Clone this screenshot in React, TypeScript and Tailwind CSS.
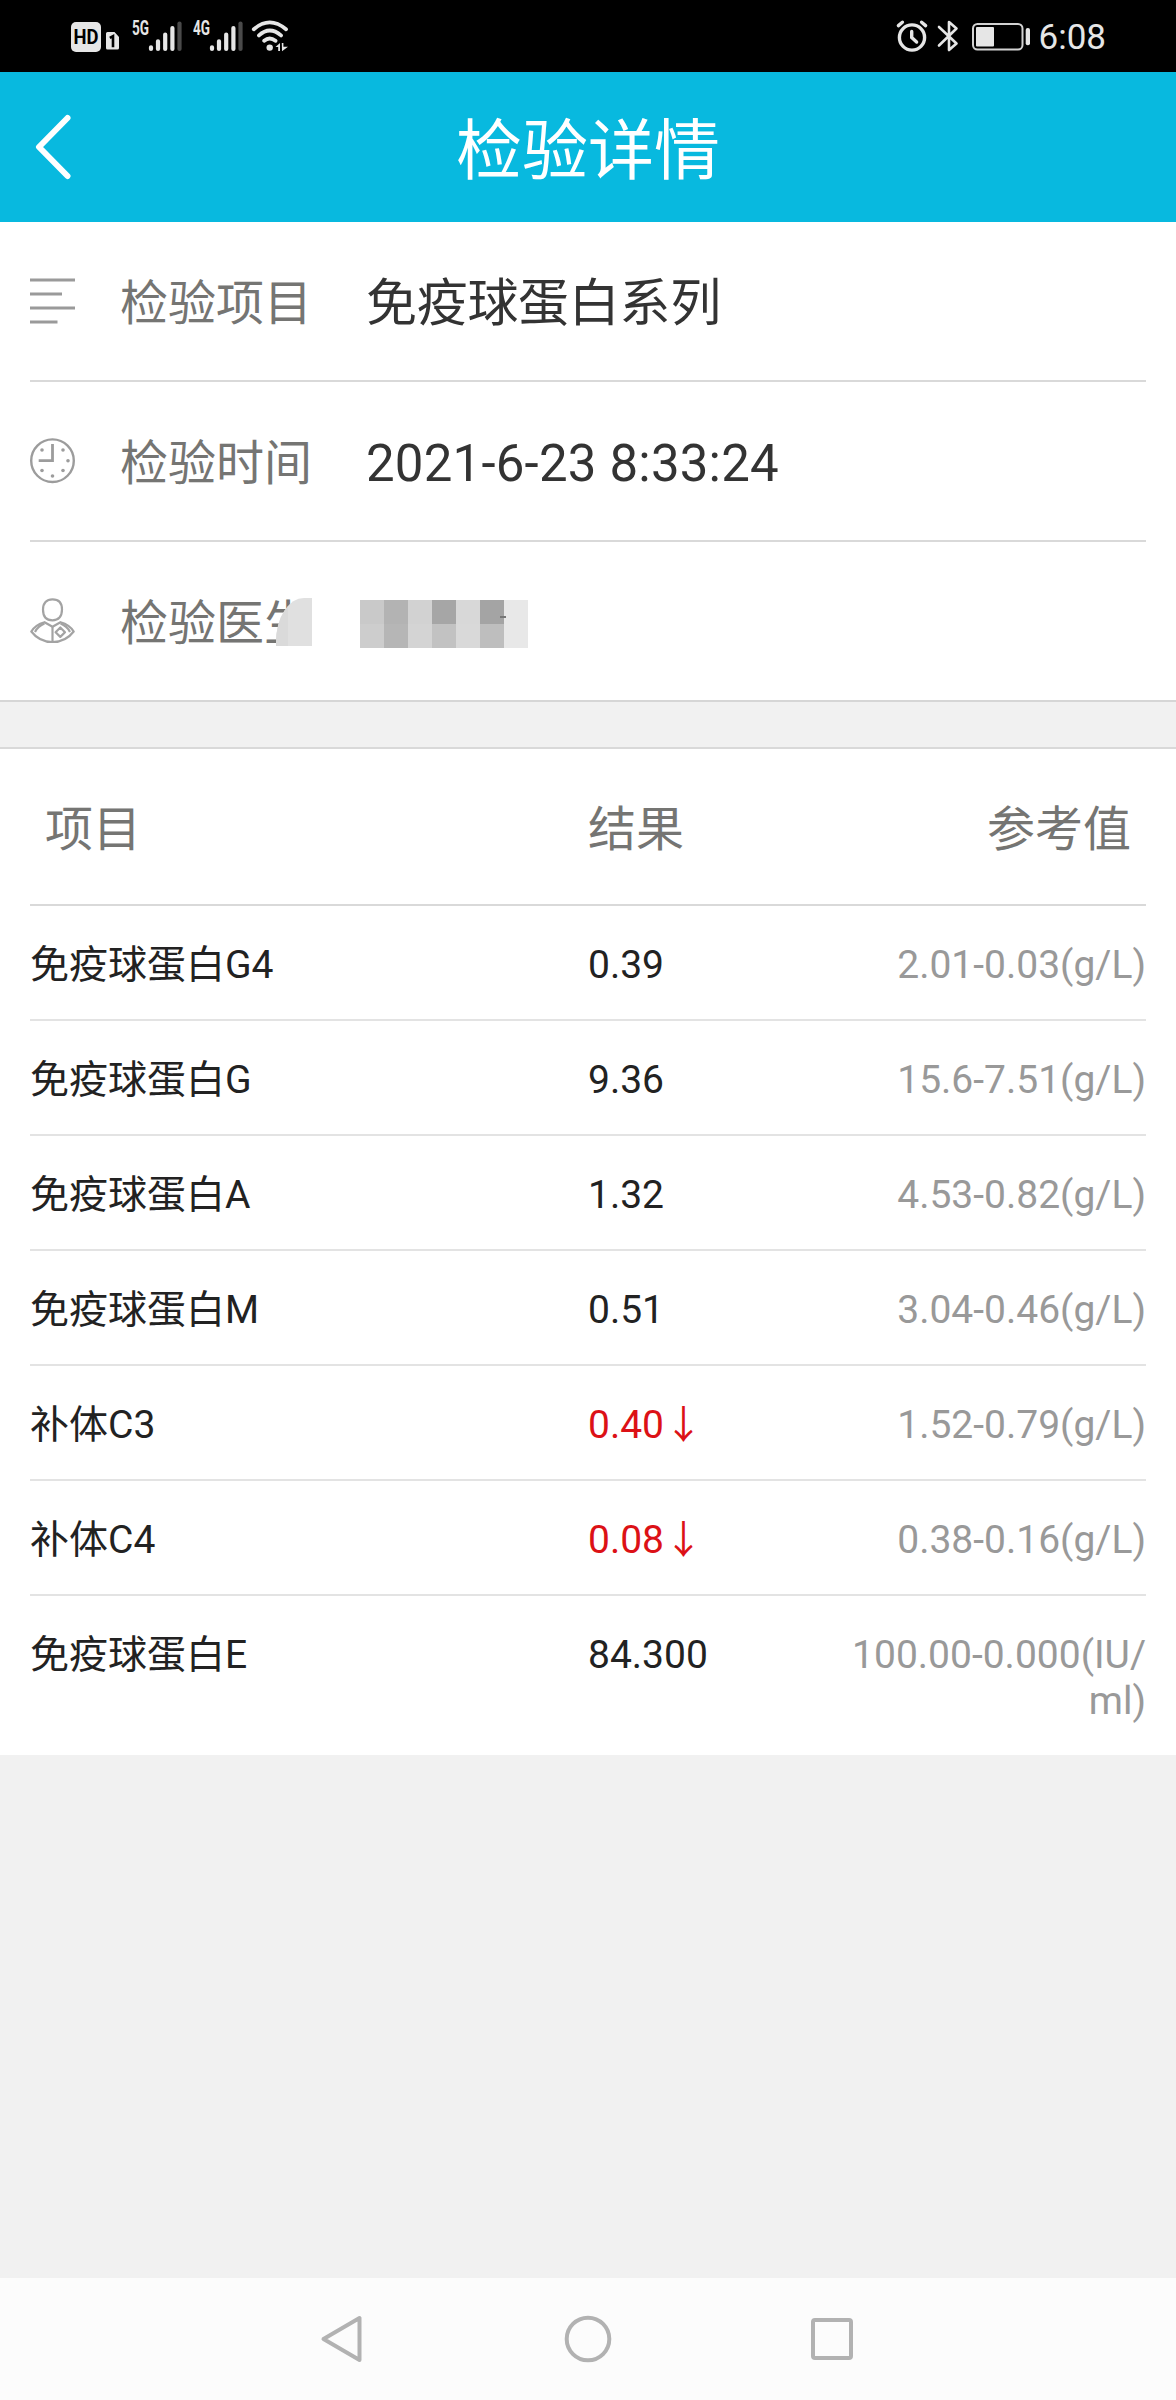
import React from "react";

type Result = { name: string; value: string; reference: string; low?: boolean };

const results: Result[] = [
  { name: "免疫球蛋白G4", value: "0.39", reference: "2.01-0.03(g/L)" },
  { name: "免疫球蛋白G", value: "9.36", reference: "15.6-7.51(g/L)" },
  { name: "免疫球蛋白A", value: "1.32", reference: "4.53-0.82(g/L)" },
  { name: "免疫球蛋白M", value: "0.51", reference: "3.04-0.46(g/L)" },
  { name: "补体C3", value: "0.40", reference: "1.52-0.79(g/L)", low: true },
  { name: "补体C4", value: "0.08", reference: "0.38-0.16(g/L)", low: true },
  { name: "免疫球蛋白E", value: "84.300", reference: "100.00-0.000(IU/\nml)" },
];

function Signal({ label }: { label: string }) {
  return (
    <svg className="-mt-[9px]" width="50" height="43" viewBox="0 -9 50 43">
      <text x="0" y="15.5" fontFamily="Roboto" fontWeight="700" fontSize="19.5" textLength="17" lengthAdjust="spacingAndGlyphs" fill="#e6e6e6">
        {label}
      </text>
      <g strokeWidth="4.2" strokeLinecap="round" stroke="#e6e6e6">
        <path d="M19 28.3V30M26 22.3V30M33.2 15.5V30M40.4 9V30" />
        <path d="M47.5 4.5V30" stroke="#4a4a4a" />
      </g>
    </svg>
  );
}

function StatusBar() {
  return (
    <div className="flex h-[72px] items-start bg-black pl-[71px] pr-[70px] pt-[19px]">
      <div className="mt-[3px] flex h-[30px] w-[30px] items-center justify-center rounded-[5px] bg-[#e6e6e6]">
        <svg width="30" height="30" viewBox="0 0 30 30">
          <text x="2.5" y="21.8" fontFamily="Roboto" fontWeight="700" fontSize="19.5" textLength="25" lengthAdjust="spacingAndGlyphs" fill="#000">
            HD
          </text>
        </svg>
      </div>
      <svg className="ml-[5px] mt-[13px]" width="13" height="18" viewBox="0 0 13 18">
        <path d="M1.5 0H8.5L13 5V16a1.5 1.5 0 0 1-1.5 1.5H1.5A1.5 1.5 0 0 1 0 16V1.5A1.5 1.5 0 0 1 1.5 0Z" fill="#e6e6e6" />
        <path d="M3.8 5.8 7 4.2V15.3" stroke="#000" strokeWidth="2.6" fill="none" />
      </svg>
      <div className="ml-[13px] flex gap-[11px]">
        <Signal label="5G" />
        <Signal label="4G" />
      </div>
      <svg className="ml-[8px]" width="38" height="34" viewBox="0 0 38 34" fill="none" stroke="#e6e6e6" strokeWidth="3.8" strokeLinecap="round">
        <path d="M2.8 10.3Q18.5-3.5 35 10.3M8 16.4Q18.5 6.5 30 16.4M13.2 21.8Q18.5 17.2 24.5 21.8" />
        <circle cx="18.7" cy="28.6" r="3.2" fill="#e6e6e6" stroke="none" />
        <path d="M24.5 28 29 24V32H27.2V28ZM30.8 24H32.4V27.8H37L31 32.3Z" fill="#e6e6e6" stroke="none" />
      </svg>

      <svg className="ml-auto" width="32" height="34" viewBox="0 0 32 34" fill="none" stroke="#e6e6e6" strokeWidth="3.4" strokeLinecap="round">
        <circle cx="16" cy="18.5" r="12.6" />
        <path d="M2.4 6.6 6.4 3.2M29.6 6.6 25.6 3.2M15.7 12.5V18.6L20.6 23" />
      </svg>
      <svg className="ml-[9px]" width="22" height="34" viewBox="0 0 22 34" fill="none" stroke="#e6e6e6" strokeWidth="2.6" strokeLinejoin="round" strokeLinecap="round">
        <path d="M2 8 19.5 24.5 12 31V3L19.5 9.5 2 26.5" />
      </svg>
      <svg className="ml-[13px]" width="60" height="34" viewBox="0 0 60 34">
        <rect x="1" y="5" width="49.5" height="25.5" rx="4.5" fill="none" stroke="#d2d2d2" strokeWidth="2" />
        <rect x="4" y="8" width="18" height="19.5" rx="1" fill="#e6e6e6" />
        <rect x="53.7" y="9" width="4.3" height="17.3" rx="2" fill="#e6e6e6" />
      </svg>
      <span className="ml-[7px] mt-px text-[35px] leading-[36px] text-[#e6e6e6]">6:08</span>
    </div>
  );
}

function InfoRow({ icon, label, children, last }: { icon: React.ReactNode; label: React.ReactNode; children: React.ReactNode; last?: boolean }) {
  return (
    <div className={last ? "flex h-[158px] items-center" : "flex h-[160px] items-center border-b-2 border-[#d9d9d9]"}>
      <div className="w-[90px]">{icon}</div>
      <div className="w-[246px] pt-[6px] text-[48px] leading-[60px] text-[#757573]">{label}</div>
      <div className="pt-[6px] text-[51px] leading-[60px] text-[#333]">{children}</div>
    </div>
  );
}

const ListIcon = () => (
  <svg width="46" height="46" viewBox="0 0 46 46" stroke="#9a9a9a" strokeWidth="3.2">
    <path d="M0 2H45M0 16H32M0 30H45M0 44H27.5" />
  </svg>
);

const ClockIcon = () => (
  <svg width="46" height="46" viewBox="0 0 46 46" fill="none" stroke="#9c9c9c">
    <circle cx="22.5" cy="22.7" r="21.3" strokeWidth="2.4" />
    <path d="M22.5 6V22.7H8.7" strokeWidth="2.8" />
    <g fill="#9c9c9c" stroke="none">
      <circle cx="12" cy="12" r="1.8" />
      <circle cx="33" cy="12" r="1.8" />
      <circle cx="38" cy="22.7" r="1.8" />
      <circle cx="33" cy="32.5" r="1.8" />
      <circle cx="12" cy="32.5" r="1.8" />
      <circle cx="22.5" cy="38" r="1.8" />
    </g>
  </svg>
);

const DoctorIcon = () => (
  <svg width="46" height="46" viewBox="0 0 46 46" fill="none" stroke="#a3a3a3" strokeWidth="2.2" strokeLinejoin="round">
    <path d="M22.5 1.3C28.5 1.3 32 5 32 11.5C32 18.5 28.5 22.3 22.5 22.3C16.5 22.3 13 18.5 13 11.5C13 5 16.5 1.3 22.5 1.3Z" />
    <path d="M14.5 24.2C8 26 4 29 1.3 33.5C7 41 14 44 22.5 44S38 41 43.7 33.5C41 29 37 26 30.5 24.2L22.5 28.7Z" />
    <path d="M22.5 29V44M5 34Q8 28 14.5 25.5M40 34Q37 28 30.5 25.5M30.3 29.5 35 34.2 30.3 38.9 25.6 34.2Z" />
  </svg>
);

const mosaic = [
  "bg-[#c9c9c9]", "bg-[#b3b3b3]", "bg-[#d2d2d2]", "bg-[#a6a6a6]", "bg-[#d8d8d8]", "bg-[#a4a4a4]", "bg-[#e8e8e8]",
  "bg-[#cdcdcd]", "bg-[#b6b6b6]", "bg-[#d4d4d4]", "bg-[#c2c2c2]", "bg-[#d9d9d9]", "bg-[#bebebe]", "bg-[#e8e8e8]",
];

export default function App() {
  return (
    <div className="flex h-[2400px] w-[1176px] flex-col overflow-hidden bg-[#f1f1f1] font-['Roboto','Noto_Sans_CJK_SC',sans-serif]">
      <StatusBar />
      <header className="grid h-[150px] grid-cols-[200px_1fr_200px] items-center bg-[#08b9df]">
        <svg className="ml-[34px]" width="38" height="66" viewBox="0 0 38 66" fill="none" stroke="#fff" strokeWidth="6" strokeLinecap="round" strokeLinejoin="round">
          <path d="M33.5 4 5 33 33.5 62" />
        </svg>
        <h1 className="pt-[10px] text-center text-[66px] leading-[80px] text-white">检验详情</h1>
      </header>

      <section className="border-b-2 border-[#d6d6d6] bg-white px-[30px]">
        <InfoRow icon={<ListIcon />} label="检验项目">
          <span className="tracking-[-0.3px]">免疫球蛋白系列</span>
        </InfoRow>
        <InfoRow icon={<ClockIcon />} label="检验时间">
          <span className="tracking-[0.2px]">2021-6-23 8:33:24</span>
        </InfoRow>
        <InfoRow
          last
          icon={<DoctorIcon />}
          label={
            <span className="relative">
              检验医生
              <span className="absolute left-[156px] top-[3px] flex h-[48px] w-[36px] overflow-hidden rounded-tl-[28px_44px] bg-[#e0e0e0]">
                <span className="w-[12px] bg-[#dadada]" />
              </span>
            </span>
          }
        >
          <div className="relative -ml-[6px] grid grid-cols-[repeat(7,24px)]">
            {mosaic.map((tone, i) => (
              <div key={i} className={`h-[24px] ${tone}`} />
            ))}
            <span className="absolute left-[140px] top-[16px] h-[2px] w-[6px] bg-[#777]" />
          </div>
        </InfoRow>
      </section>

      <section className="mt-[45px] border-t-2 border-[#d9d9d9] bg-white px-[30px]">
        <div className="flex h-[157px] items-center border-b-2 border-[#d9d9d9] px-[15px] pt-[6px] text-[48px] leading-[60px] text-[#757573]">
          <span className="w-[543px]">项目</span>
          <span>结果</span>
          <span className="ml-auto">参考值</span>
        </div>
        {results.map((r) => (
          <div key={r.name} className="flex border-b-2 border-[#e3e3e3] pb-[31px] pt-[36px] text-[39px] leading-[46px] text-[#222] last:border-b-0">
            <span className="w-[558px]">{r.name}</span>
            <span className={r.low ? "text-[#dc1116]" : ""}>
              {r.value}
              {r.low && "↓"}
            </span>
            <span className="ml-auto whitespace-pre text-right text-[#999]">{r.reference}</span>
          </div>
        ))}
      </section>

      <nav className="mt-auto flex h-[122px] items-center justify-between bg-[#fcfcfc] pl-[320px] pr-[322px]">
        <svg width="44" height="50" viewBox="0 0 44 50" fill="none" stroke="#b2b2b2" strokeWidth="4" strokeLinejoin="round">
          <path d="M39.5 4V46L3.5 25Z" />
        </svg>
        <svg width="50" height="50" viewBox="0 0 50 50" fill="none" stroke="#b2b2b2" strokeWidth="4">
          <circle cx="26" cy="25" r="21.3" />
        </svg>
        <svg width="44" height="50" viewBox="0 0 44 50" fill="none" stroke="#b2b2b2" strokeWidth="4">
          <rect x="3" y="6" width="38" height="38" rx="2" />
        </svg>
      </nav>
    </div>
  );
}
